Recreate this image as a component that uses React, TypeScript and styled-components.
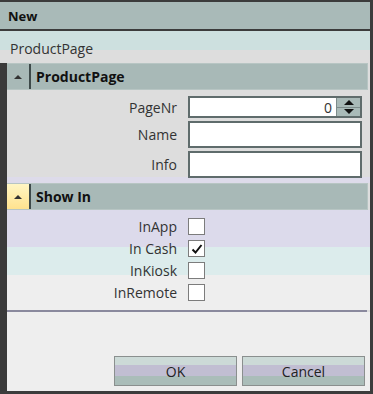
import React from "react";
import styled, { createGlobalStyle } from "styled-components";

const GlobalStyle = createGlobalStyle`
  html, body {
    margin: 0;
    padding: 0;
    background: #3a3a3a;
  }
  * {
    box-sizing: border-box;
  }
`;

const Window = styled.div`
  width: 373px;
  height: 394px;
  display: flex;
  flex-direction: column;
  border-top: 2px solid #3c3c3c;
  border-right: 3px solid #3c3c3c;
  border-bottom: 3px solid #3c3c3c;
  background: #3a3a3a;
  font-family: "Open Sans", "Segoe UI", sans-serif;
  font-size: 14px;
  color: #222;
`;

const TitleBar = styled.div`
  height: 29px;
  display: flex;
  align-items: center;
  padding-left: 8px;
  background: #a9bab8;
  border-bottom: 2px solid #3c3c3c;
  font-weight: 700;
  font-size: 13px;
  color: #111;
`;

const PathLabel = styled.div`
  height: 32px;
  padding: 8px 0 0 10px;
  line-height: 19px;
  background: linear-gradient(#cde0df 0 19px, #dddddd 19px);
  color: #333;
`;

const Body = styled.div`
  flex: 1;
  display: flex;
  flex-direction: column;
  margin-left: 7px;
  background: #dddddd;
`;

const SectionHeader = styled.div`
  height: 27px;
  margin-right: 2px;
  display: flex;
  align-items: stretch;
  background: #a8b9b7;
  border: 1px solid #b7c5c3;
  border-left: none;
`;

const Expander = styled.div<{ $hot?: boolean }>`
  width: 24px;
  display: flex;
  align-items: center;
  justify-content: center;
  border-right: 2px solid #3e4a4a;
  background: ${(p) => (p.$hot ? "linear-gradient(#fff6c4, #ffe28e)" : "#a8b9b7")};
`;

const Arrow = styled.span`
  width: 0;
  height: 0;
  border-left: 4px solid transparent;
  border-right: 4px solid transparent;
  border-bottom: 4px solid #333;
`;

const HeaderTitle = styled.span`
  display: flex;
  align-items: center;
  padding-left: 5px;
  font-weight: 700;
  font-size: 14px;
  color: #111;
`;

const FieldGrid = styled.div`
  display: grid;
  grid-template-columns: 170px 174px;
  column-gap: 11px;
  row-gap: 3px;
  align-items: center;
  padding: 6px 0 5px;
  background: linear-gradient(#dddddd 0 calc(100% - 6px), #dddbea calc(100% - 6px));
`;

const FieldLabel = styled.span`
  text-align: right;
  line-height: 17px;
  color: #333;
`;

const TextBox = styled.div<{ $h: number }>`
  height: ${(p) => p.$h}px;
  display: flex;
  background: #fff;
  border: 2px solid #5f6c6c;
`;

const NumberText = styled.span`
  flex: 1;
  display: flex;
  align-items: center;
  justify-content: flex-end;
  padding-right: 4px;
  font-size: 14px;
  color: #333;
`;

const Spinner = styled.div`
  width: 24px;
  display: flex;
  flex-direction: column;
  background: #a9bab8;
  border-left: 1px solid #7d8c8b;
`;

const SpinHalf = styled.div`
  flex: 1;
  display: flex;
  align-items: center;
  justify-content: center;
  & + & {
    border-top: 1px solid #7d8c8b;
  }
`;

const SpinArrow = styled.span<{ $down?: boolean }>`
  width: 0;
  height: 0;
  border-left: 5px solid transparent;
  border-right: 5px solid transparent;
  ${(p) => (p.$down ? "border-top: 5px solid #111;" : "border-bottom: 5px solid #111;")}
`;

const CheckGrid = styled.div`
  display: grid;
  grid-template-columns: 170px 20px;
  column-gap: 11px;
  row-gap: 5px;
  align-items: center;
  padding: 8px 0 9px;
  background: linear-gradient(#dcdaeb 0 37px, #dcecec 37px 65px, #eeeeee 65px);
`;

const CheckBox = styled.div`
  width: 17px;
  height: 17px;
  display: flex;
  align-items: center;
  justify-content: center;
  background: #fff;
  border: 1px solid #7c7c7c;
`;

const Separator = styled.div`
  height: 2px;
  margin-right: 3px;
  background: #8a899d;
`;

const Footer = styled.div`
  flex: 1;
  display: flex;
  justify-content: flex-end;
  align-items: flex-end;
  gap: 5px;
  padding: 0 5px 5px 0;
  background: #eeeeee;
`;

const Button = styled.button`
  width: 123px;
  height: 30px;
  padding: 0;
  border: 1px solid #8a8f8e;
  background: linear-gradient(#ccdad7 0 30%, #c1bed2 30% 68%, #aabdb9 68%);
  font-family: "Open Sans", "Segoe UI", sans-serif;
  font-size: 14px;
  color: #222;
`;

const fields = [
  { label: "PageNr", kind: "number" },
  { label: "Name", kind: "text" },
  { label: "Info", kind: "text" },
];

const flags = [
  { label: "InApp", checked: false },
  { label: "In Cash", checked: true },
  { label: "InKiosk", checked: false },
  { label: "InRemote", checked: false },
];

export default function App() {
  return (
    <>
      <GlobalStyle />
      <Window>
        <TitleBar>New</TitleBar>
        <PathLabel>ProductPage</PathLabel>
        <Body>
          <SectionHeader>
            <Expander>
              <Arrow />
            </Expander>
            <HeaderTitle>ProductPage</HeaderTitle>
          </SectionHeader>
          <FieldGrid>
            {fields.map((f) => (
              <React.Fragment key={f.label}>
                <FieldLabel>{f.label}</FieldLabel>
                {f.kind === "number" ? (
                  <TextBox $h={22}>
                    <NumberText>0</NumberText>
                    <Spinner>
                      <SpinHalf>
                        <SpinArrow />
                      </SpinHalf>
                      <SpinHalf>
                        <SpinArrow $down />
                      </SpinHalf>
                    </Spinner>
                  </TextBox>
                ) : (
                  <TextBox $h={27} />
                )}
              </React.Fragment>
            ))}
          </FieldGrid>
          <SectionHeader>
            <Expander $hot>
              <Arrow />
            </Expander>
            <HeaderTitle>Show In</HeaderTitle>
          </SectionHeader>
          <CheckGrid>
            {flags.map((f) => (
              <React.Fragment key={f.label}>
                <FieldLabel>{f.label}</FieldLabel>
                <CheckBox>
                  {f.checked && (
                    <svg width="12" height="12" viewBox="0 0 12 12">
                      <path d="M1.5 6.5 L4.5 9.5 L10.5 2" fill="none" stroke="#111" strokeWidth="2" />
                    </svg>
                  )}
                </CheckBox>
              </React.Fragment>
            ))}
          </CheckGrid>
          <Separator />
          <Footer>
            <Button>OK</Button>
            <Button>Cancel</Button>
          </Footer>
        </Body>
      </Window>
    </>
  );
}
